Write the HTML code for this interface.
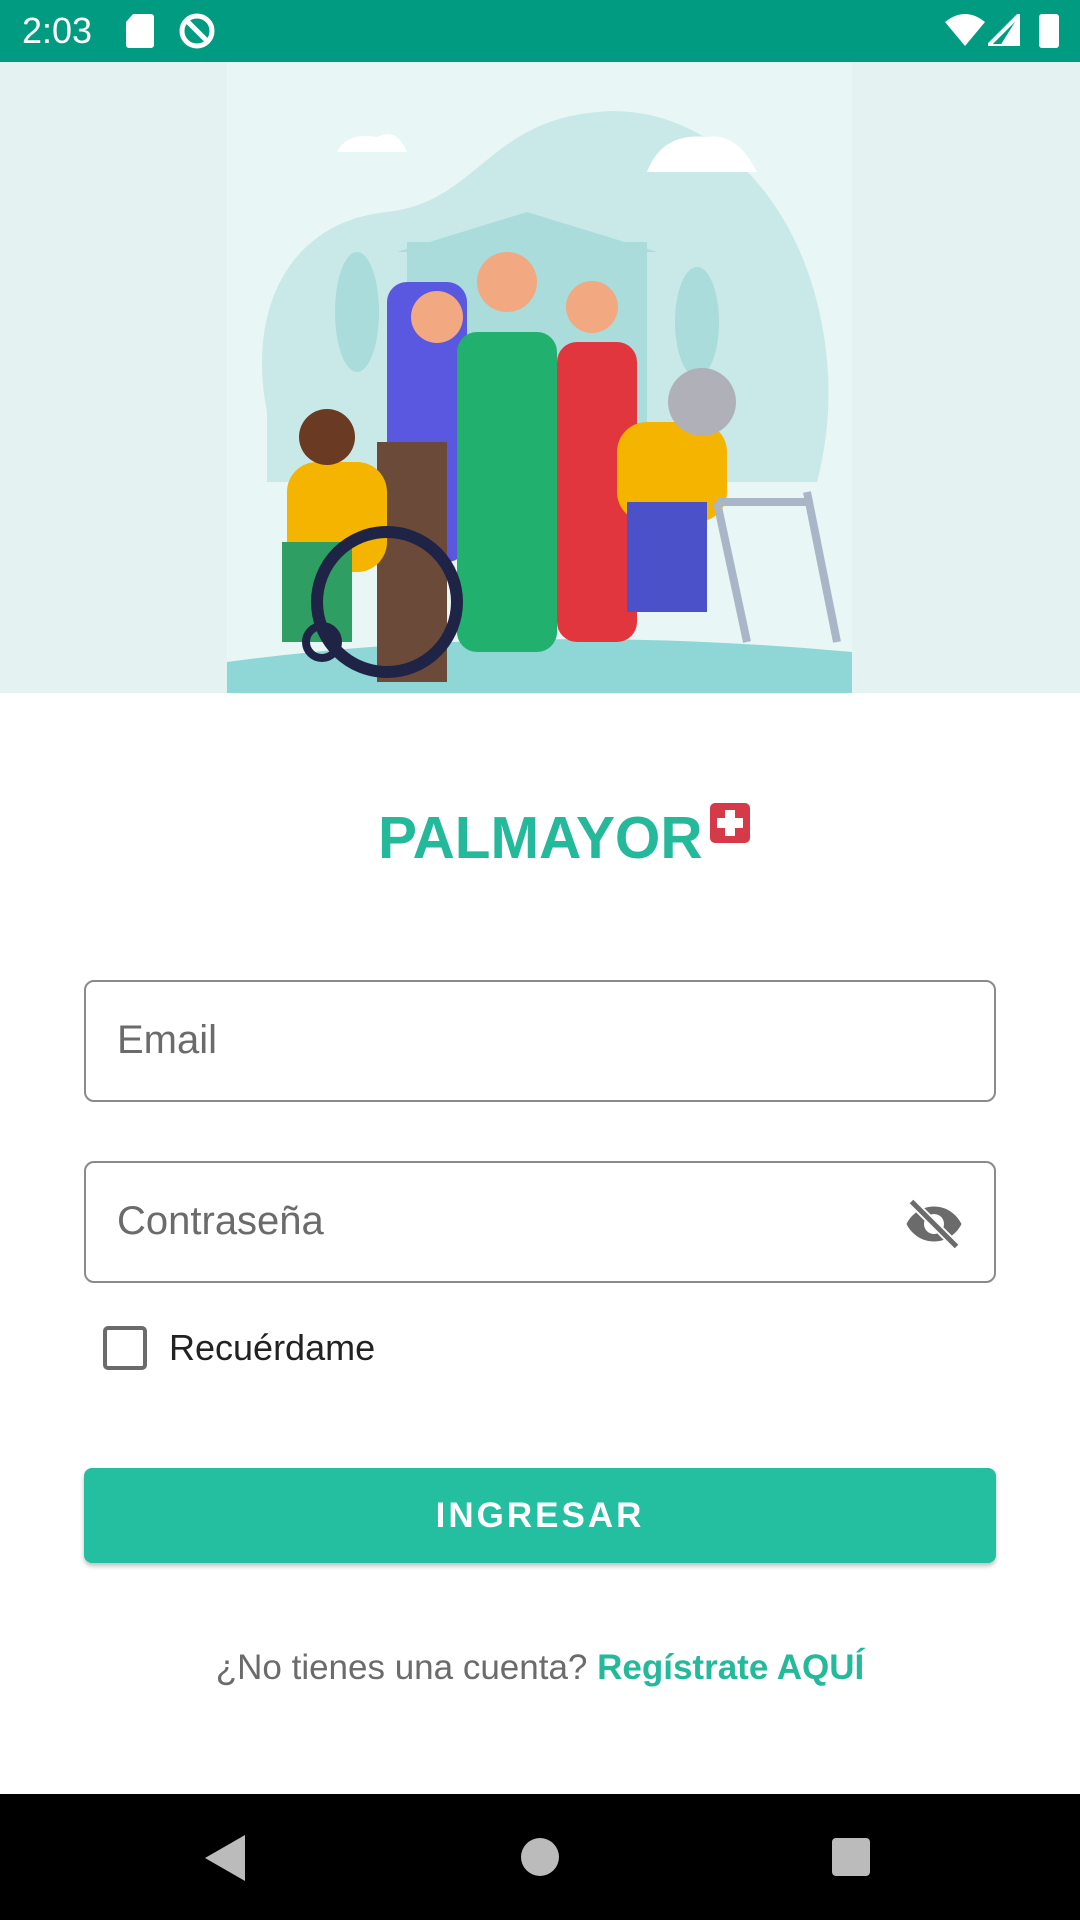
<!DOCTYPE html>
<html><head><meta charset="utf-8"><style>
body{margin:0;width:1080px;height:1920px;position:relative;background:#fff;font-family:"Liberation Sans",sans-serif;overflow:hidden}
.abs{position:absolute}
.field{position:absolute;left:84px;width:912px;border:2.5px solid #8a8a8a;border-radius:10px;box-sizing:border-box}
.ph{position:absolute;left:31px;top:36px;font-size:40px;color:#6b6b6b}
</style></head><body>
<div class="abs" style="left:0;top:0;width:1080px;height:62px;background:#009b80"></div>
<div class="abs" style="left:22px;top:10px;color:#fff;font-size:36px">2:03</div>
<svg class="abs" style="left:125px;top:14px" width="30" height="34"><path d="M8 0h18a3 3 0 0 1 3 3v28a3 3 0 0 1-3 3H4a3 3 0 0 1-3-3V8z" fill="#fff"/></svg>
<svg class="abs" style="left:178px;top:12px" width="38" height="38"><circle cx="19" cy="19" r="15" fill="none" stroke="#fff" stroke-width="5"/><path d="M10 10l18 18" stroke="#fff" stroke-width="5"/></svg>
<svg class="abs" style="left:945px;top:14px" width="40" height="32"><path d="M20 32L0 8Q20-8 40 8z" fill="#fff"/></svg>
<svg class="abs" style="left:988px;top:14px" width="32" height="32"><path d="M32 0v32H0z" fill="none" stroke="#fff" stroke-width="4"/><path d="M32 0v32H12z" fill="#fff"/></svg>
<div class="abs" style="left:1039px;top:14px;width:20px;height:34px;background:#fff;border-radius:3px"></div>

<div class="abs" style="left:0;top:62px;width:1080px;height:631px;background:#e4f3f2"></div>
<svg class="abs" style="left:227px;top:62px" width="625" height="631" viewBox="0 0 625 631">
<rect width="625" height="631" fill="#e8f6f5"/>
<path d="M40 350C20 250 60 160 160 150C250 140 260 60 370 50C470 40 560 120 590 240C610 320 600 380 590 420H40z" fill="#c9e9e8"/>
<rect x="180" y="180" width="240" height="200" fill="#a9dcdb"/>
<path d="M170 190L300 150L430 190z" fill="#a9dcdb"/>
<ellipse cx="130" cy="250" rx="22" ry="60" fill="#a9dcdb"/>
<ellipse cx="470" cy="260" rx="22" ry="55" fill="#a9dcdb"/>
<path d="M0 600Q300 560 625 590V631H0z" fill="#8fd6d6"/>
<path d="M110 90q10-20 40-15q20-10 30 15z" fill="#fff"/><path d="M420 110q15-40 60-35q30-5 50 35z" fill="#fff"/>
<rect x="160" y="220" width="80" height="280" rx="20" fill="#5a57e0"/>
<rect x="150" y="380" width="70" height="240" fill="#6b4a3a"/>
<rect x="230" y="270" width="100" height="320" rx="20" fill="#22b06e"/>
<circle cx="280" cy="220" r="30" fill="#f2a880"/><circle cx="210" cy="255" r="26" fill="#f2a880"/>
<rect x="330" y="280" width="80" height="300" rx="20" fill="#e2363e"/>
<circle cx="365" cy="245" r="26" fill="#f2a880"/>
<rect x="390" y="360" width="110" height="100" rx="30" fill="#f5b400"/>
<rect x="400" y="440" width="80" height="110" fill="#4b52c9"/>
<circle cx="475" cy="340" r="34" fill="#b0b0b8"/>
<rect x="60" y="400" width="100" height="110" rx="30" fill="#f5b400"/>
<rect x="55" y="480" width="70" height="100" fill="#2f9e62"/>
<circle cx="100" cy="375" r="28" fill="#6a3a22"/>
<circle cx="160" cy="540" r="70" fill="none" stroke="#1f2346" stroke-width="12"/>
<circle cx="95" cy="580" r="16" fill="none" stroke="#1f2346" stroke-width="8"/>
<path d="M490 440l30 140M580 430l30 150M490 440h90" stroke="#a8b6c8" stroke-width="8" fill="none"/>
</svg>

<div class="abs" style="left:378px;top:804px;font-size:59px;font-weight:bold;color:#24b99a;white-space:nowrap;transform:scaleX(0.99);transform-origin:left">PALMAYOR</div>
<svg class="abs" style="left:710px;top:803px" width="40" height="40"><rect width="40" height="40" rx="5" fill="#d63a48"/><path d="M15 7h10v8h8v10h-8v8H15v-8H7V15h8z" fill="#fff"/></svg>

<div class="field" style="top:980px;height:122px"><div class="ph">Email</div></div>
<div class="field" style="top:1161px;height:122px"><div class="ph">Contraseña</div>
<svg class="abs" style="left:818px;top:36px" width="60" height="50" viewBox="0 0 24 20"><path d="M12 3C7 3 3 6 1 10c2 4 6 7 11 7s9-3 11-7c-2-4-6-7-11-7zm0 11a4 4 0 1 1 0-8 4 4 0 0 1 0 8z" fill="#6b6b6b"/><path d="M3 1l18 18" stroke="#fff" stroke-width="3.5"/><path d="M3 1l18 18" stroke="#6b6b6b" stroke-width="2"/></svg></div>

<div class="abs" style="left:103px;top:1326px;width:44px;height:44px;border:4px solid #6b6b6b;border-radius:5px;box-sizing:border-box"></div>
<div class="abs" style="left:169px;top:1327px;font-size:36px;color:#222">Recuérdame</div>

<div class="abs" style="left:84px;top:1468px;width:912px;height:95px;background:#24bfa0;border-radius:8px;box-shadow:0 3px 5px rgba(0,0,0,.25);color:#fff;font-size:35px;font-weight:bold;letter-spacing:3px;text-align:center;line-height:95px">INGRESAR</div>

<div class="abs" style="left:0;top:1648px;width:1080px;text-align:center;font-size:35px;color:#6b6b6b">¿No tienes una cuenta? <b style="color:#24b99a">Regístrate AQUÍ</b></div>

<div class="abs" style="left:0;top:1794px;width:1080px;height:126px;background:#000"></div>
<svg class="abs" style="left:205px;top:1835px" width="40" height="46"><path d="M40 0v46L0 23z" fill="#bbb"/></svg>
<div class="abs" style="left:521px;top:1838px;width:38px;height:38px;border-radius:50%;background:#bbb"></div>
<div class="abs" style="left:832px;top:1838px;width:38px;height:38px;border-radius:4px;background:#bbb"></div>
</body></html>
